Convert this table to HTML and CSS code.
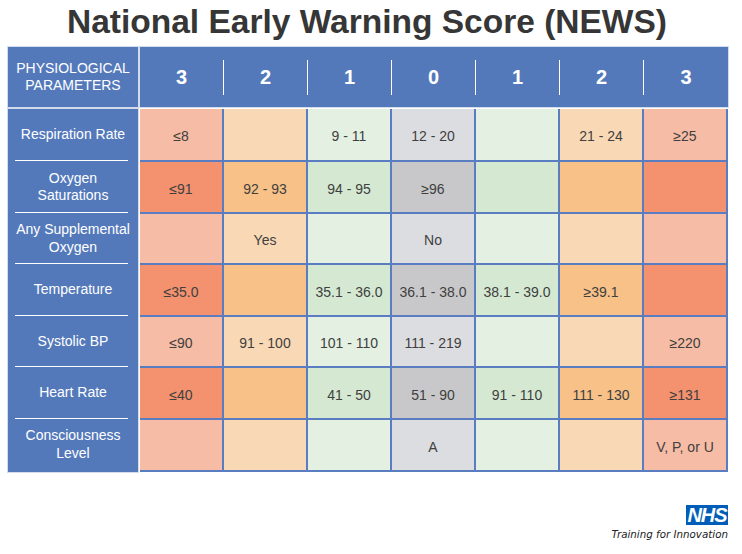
FILE: index.html
```html
<!DOCTYPE html>
<html lang="en">
<head>
<meta charset="utf-8">
<title>National Early Warning Score (NEWS)</title>
<link rel="stylesheet" href="styles.css">
</head>
<body>
<main class="page">
  <h1 class="title">National Early Warning Score (NEWS)</h1>
  <section class="news">
    <div class="head">
      <div class="head-label">PHYSIOLOGICAL<br>PARAMETERS</div>
      <div class="head-scores">
        <div class="score">3</div>
        <div class="score">2</div>
        <div class="score">1</div>
        <div class="score">0</div>
        <div class="score">1</div>
        <div class="score">2</div>
        <div class="score">3</div>
      </div>
    </div>
    <div class="body">
      <div class="labels">
        <div class="label">Respiration Rate</div>
        <div class="sep"></div>
        <div class="label">Oxygen<br>Saturations</div>
        <div class="sep"></div>
        <div class="label">Any Supplemental<br>Oxygen</div>
        <div class="sep"></div>
        <div class="label">Temperature</div>
        <div class="sep"></div>
        <div class="label">Systolic BP</div>
        <div class="sep"></div>
        <div class="label">Heart Rate</div>
        <div class="sep"></div>
        <div class="label">Consciousness<br>Level</div>
      </div>
      <div class="grid">
        <div class="cell s3">≤8</div>
        <div class="cell s2"></div>
        <div class="cell s1">9 - 11</div>
        <div class="cell s0">12 - 20</div>
        <div class="cell s1"></div>
        <div class="cell s2">21 - 24</div>
        <div class="cell s3">≥25</div>

        <div class="cell s3 dark">≤91</div>
        <div class="cell s2 dark">92 - 93</div>
        <div class="cell s1 dark">94 - 95</div>
        <div class="cell s0 dark">≥96</div>
        <div class="cell s1 dark"></div>
        <div class="cell s2 dark"></div>
        <div class="cell s3 dark"></div>

        <div class="cell s3"></div>
        <div class="cell s2">Yes</div>
        <div class="cell s1"></div>
        <div class="cell s0">No</div>
        <div class="cell s1"></div>
        <div class="cell s2"></div>
        <div class="cell s3"></div>

        <div class="cell s3 dark">≤35.0</div>
        <div class="cell s2 dark"></div>
        <div class="cell s1 dark">35.1 - 36.0</div>
        <div class="cell s0 dark">36.1 - 38.0</div>
        <div class="cell s1 dark">38.1 - 39.0</div>
        <div class="cell s2 dark">≥39.1</div>
        <div class="cell s3 dark"></div>

        <div class="cell s3">≤90</div>
        <div class="cell s2">91 - 100</div>
        <div class="cell s1">101 - 110</div>
        <div class="cell s0">111 - 219</div>
        <div class="cell s1"></div>
        <div class="cell s2"></div>
        <div class="cell s3">≥220</div>

        <div class="cell s3 dark">≤40</div>
        <div class="cell s2 dark"></div>
        <div class="cell s1 dark">41 - 50</div>
        <div class="cell s0 dark">51 - 90</div>
        <div class="cell s1 dark">91 - 110</div>
        <div class="cell s2 dark">111 - 130</div>
        <div class="cell s3 dark">≥131</div>

        <div class="cell s3"></div>
        <div class="cell s2"></div>
        <div class="cell s1"></div>
        <div class="cell s0">A</div>
        <div class="cell s1"></div>
        <div class="cell s2"></div>
        <div class="cell s3">V, P, or U</div>
      </div>
    </div>
  </section>
  <footer class="brand">
    <div class="nhs">NHS</div>
    <div class="tagline">Training for Innovation</div>
  </footer>
</main>
</body>
</html>
```
FILE: styles.css
```css
html, body {
  margin: 0;
  padding: 0;
  background: #ffffff;
}

.page {
  width: 742px;
  height: 554px;
  box-sizing: border-box;
  padding-left: 8px;
  font-family: "Liberation Sans", Arial, sans-serif;
}

.title {
  margin: 0;
  width: 718px;
  height: 47px;
  box-sizing: border-box;
  padding-top: 3px;
  font-size: 33.5px;
  line-height: 38px;
  font-weight: 700;
  color: #363636;
  text-align: center;
}

.head {
  display: flex;
  gap: 2px;
  height: 60px;
}

.head-label {
  width: 130px;
  background: #5479bb;
  color: #ffffff;
  font-size: 14px;
  line-height: 17px;
  text-align: center;
  display: flex;
  align-items: center;
  justify-content: center;
  outline: 1px solid #d3dced;
}

.head-scores {
  width: 588px;
  background: #5479bb;
  display: grid;
  grid-template-columns: repeat(7, 84px);
  align-items: center;
  outline: 1px solid #d3dced;
}

.score {
  height: 35px;
  box-sizing: border-box;
  border-right: 1px solid #ffffff;
  display: flex;
  align-items: center;
  justify-content: center;
  color: #ffffff;
  font-size: 20px;
  font-weight: 700;
  padding-top: 1px;
}

.score:last-child {
  border-right: none;
}

.body {
  display: flex;
  gap: 2px;
  margin-top: 2px;
}

.labels {
  width: 130px;
  background: #5479bb;
  display: grid;
  grid-template-rows: 51px 2px 50px 2px 49px 2px 50px 2px 49px 2px 50px 2px 49px;
  outline: 1px solid #d3dced;
}

.label {
  display: flex;
  align-items: center;
  justify-content: center;
  text-align: center;
  color: #ffffff;
  font-size: 14px;
  line-height: 17.5px;
}

.sep {
  margin: 0 10px 0 7px;
  border-top: 1px solid #ffffff;
}

.grid {
  display: grid;
  grid-template-columns: repeat(7, 82px);
  grid-template-rows: 51px 50px 49px 50px 49px 50px 50px;
  gap: 2px;
  padding: 0 2px 2px 0;
  background: #5a7dc1;
}

.cell {
  display: flex;
  align-items: center;
  justify-content: center;
  padding-top: 3px;
  box-sizing: border-box;
  font-size: 14px;
  line-height: 16px;
  color: #404040;
}

.s3 { background: #f7bca5; }
.s2 { background: #f9d9b5; }
.s1 { background: #e4f0e2; }
.s0 { background: #dcdde0; }

.s3.dark { background: #f4916f; }
.s2.dark { background: #f7c188; }
.s1.dark { background: #d5e9d2; }
.s0.dark { background: #c8c8ca; }

.brand {
  width: 720px;
  margin-top: 33px;
  display: flex;
  flex-direction: column;
  align-items: flex-end;
}

.nhs {
  width: 42px;
  height: 20px;
  background: #005eb8;
  color: #ffffff;
  font-size: 20px;
  line-height: 21px;
  font-weight: 700;
  font-style: italic;
  letter-spacing: -1px;
  text-align: center;
}

.tagline {
  margin-top: 3px;
  font-family: "DejaVu Sans", sans-serif;
  font-size: 10.3px;
  line-height: 12px;
  font-style: italic;
  color: #222222;
}
```
